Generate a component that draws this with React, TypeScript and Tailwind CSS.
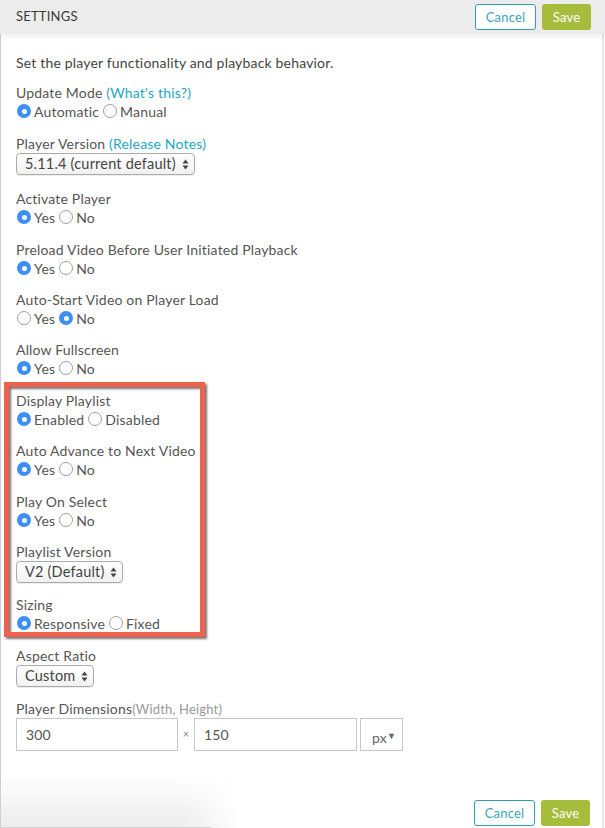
import React from "react";

const Radio = ({ checked }: { checked?: boolean }) =>
  checked ? (
    <span className="w-[14px] h-[14px] rounded-full bg-[#3b8ff5] flex items-center justify-center shrink-0">
      <span className="w-[5px] h-[5px] rounded-full bg-white" />
    </span>
  ) : (
    <span className="w-[14px] h-[14px] rounded-full border border-[#a0a0a0] bg-white shrink-0" />
  );

const RadioRow = ({ options, selected }: { options: string[]; selected: number }) => (
  <div className="flex items-center h-[18px] pl-[1px]">
    {options.map((o, i) => (
      <span key={o} className="flex items-center gap-[3px] mr-[4px]">
        <Radio checked={i === selected} />
        <span>{o}</span>
      </span>
    ))}
  </div>
);

const Arrows = () => (
  <svg width="7" height="11" viewBox="0 0 7 11" className="shrink-0">
    <path d="M3.5 0.5 L6.5 4.5 L0.5 4.5 Z" fill="#444" />
    <path d="M3.5 10.5 L6.5 6.5 L0.5 6.5 Z" fill="#444" />
  </svg>
);

const Select = ({ label, w }: { label: string; w: string }) => (
  <div
    className={`${w} h-[22px] rounded-[4px] border border-[#ababab] bg-gradient-to-b from-white to-[#f1f1f1] flex items-center justify-between pl-[8px] pr-[5px] text-[14.5px] tracking-[0.2px] text-[#444] shadow-[0_1px_1px_rgba(0,0,0,0.08)]`}
  >
    <span>{label}</span>
    <Arrows />
  </div>
);

const Label = ({ children }: { children: React.ReactNode }) => (
  <div className="h-[18px] leading-[18px]">{children}</div>
);

const Buttons = () => (
  <div className="flex items-center gap-[6px]">
    <button className="w-[61px] h-[26px] rounded-[3px] border border-[#2b9fb3] bg-white text-[#3aa6b8] text-[13px] leading-none">
      Cancel
    </button>
    <button className="w-[49px] h-[26px] rounded-[3px] bg-[#a5bd3b] text-white text-[13px] leading-none">
      Save
    </button>
  </div>
);

export default function App() {
  return (
    <div className="w-[605px] h-[828px] bg-white relative overflow-hidden font-['Lato',sans-serif] text-[14px] tracking-[0.18px] text-[#555]">
      {/* header */}
      <div className="relative z-10 h-[34px] bg-[#ececec] flex items-center justify-between pl-[16px] pr-[14px] shadow-[0_3px_5px_rgba(0,0,0,0.06)]">
        <span className="text-[13px] text-[#3a3a3a] tracking-[0.2px]">SETTINGS</span>
        <Buttons />
      </div>

      <div className="relative h-[794px] border-l border-[#cfcfcf] border-r-2 border-r-[#e6e6e6] mr-[1px]">
        <div className="pl-[15px] pt-[20px] flex flex-col">
          <div className="h-[18px] leading-[18px] text-[#444]">Set the player functionality and playback behavior.</div>

          <div className="mt-[12px]">
            <Label>
              Update Mode <span className="text-[#1ea7c5]">(What's this?)</span>
            </Label>
            <RadioRow options={["Automatic", "Manual"]} selected={0} />
          </div>

          <div className="mt-[15px]">
            <Label>
              Player Version <span className="text-[#1ea7c5]">(Release Notes)</span>
            </Label>
            <Select label="5.11.4 (current default)" w="w-[179px]" />
          </div>

          <div className="mt-[15px]">
            <Label>Activate Player</Label>
            <RadioRow options={["Yes", "No"]} selected={0} />
          </div>

          <div className="mt-[15px]">
            <Label>Preload Video Before User Initiated Playback</Label>
            <RadioRow options={["Yes", "No"]} selected={0} />
          </div>

          <div className="mt-[14px]">
            <Label>Auto-Start Video on Player Load</Label>
            <RadioRow options={["Yes", "No"]} selected={1} />
          </div>

          <div className="mt-[14px]">
            <Label>Allow Fullscreen</Label>
            <RadioRow options={["Yes", "No"]} selected={0} />
          </div>

          <div className="relative mt-[15px]">
            <div className="absolute left-[-12px] top-[-10px] w-[201px] h-[255px] border-[5px] border-[#f0614d] drop-shadow-[2px_2px_1px_rgba(0,0,0,0.55)] pointer-events-none" />
            <div>
              <Label>Display Playlist</Label>
              <RadioRow options={["Enabled", "Disabled"]} selected={0} />
            </div>
            <div className="mt-[14px]">
              <Label>Auto Advance to Next Video</Label>
              <RadioRow options={["Yes", "No"]} selected={0} />
            </div>
            <div className="mt-[15px]">
              <Label>Play On Select</Label>
              <RadioRow options={["Yes", "No"]} selected={0} />
            </div>
            <div className="mt-[14px]">
              <Label>Playlist Version</Label>
              <Select label="V2 (Default)" w="w-[107px]" />
            </div>
            <div className="mt-[13px]">
              <Label>Sizing</Label>
              <RadioRow options={["Responsive", "Fixed"]} selected={0} />
            </div>
          </div>

          <div className="mt-[15px]">
            <Label>Aspect Ratio</Label>
            <Select label="Custom" w="w-[78px]" />
          </div>

          <div className="mt-[13px]">
            <Label>
              Player Dimensions<span className="text-[#999] text-[13px]">(Width, Height)</span>
            </Label>
            <div className="flex items-center">
              <div className="w-[162px] h-[33px] border border-[#c8c8c8] flex items-center pl-[9px] text-[#555]">300</div>
              <span className="w-[16px] text-center text-[11px] text-[#888]">×</span>
              <div className="w-[163px] h-[33px] border border-[#c8c8c8] flex items-center pl-[9px] text-[#555]">150</div>
              <div className="ml-[3px] w-[43px] h-[33px] border border-[#c8c8c8] flex items-center justify-end pr-[6px] pt-[5px] text-[#666] text-[14px]">
                px<span className="text-[9px] -mt-[3px]">▼</span>
              </div>
            </div>
          </div>
        </div>

        {/* bottom-left page shadow */}
        <div className="absolute left-0 bottom-0 w-[240px] h-[55px] bg-gradient-to-b from-transparent to-[#ececec] [mask-image:linear-gradient(to_right,black_75%,transparent)] pointer-events-none" />
        <div className="absolute left-0 bottom-0 w-[210px] h-px bg-[#d4d4d4]" />

        <div className="absolute right-[12px] bottom-[2px]">
          <Buttons />
        </div>
      </div>
    </div>
  );
}
